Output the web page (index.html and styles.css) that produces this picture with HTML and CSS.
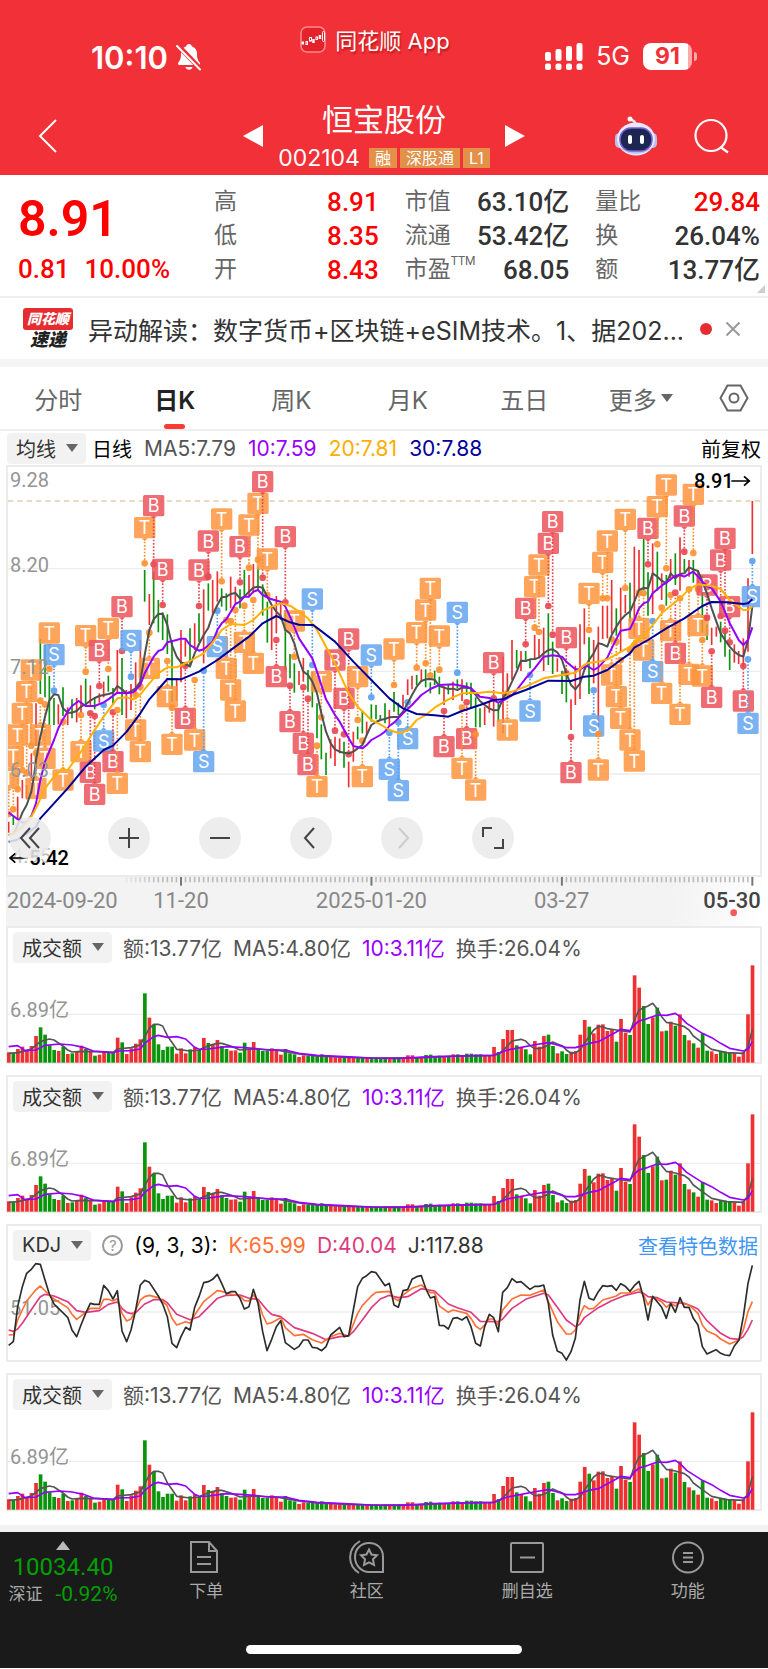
FILE: index.html
```html
<!DOCTYPE html>
<html lang="zh-CN">
<head>
<meta charset="utf-8">
<meta name="viewport" content="width=device-width, initial-scale=1">
<title>恒宝股份 002104</title>
<link rel="stylesheet" href="styles.css">
</head>
<body>
<header class="top">
  <div class="status">
    <div class="status-left">
      <span class="clock">10:10</span>
      <svg width="26" height="28" viewBox="0 0 26 28" fill="#fff"><path d="M13 1c-1.600 0-2.600 1-2.800 2.300C6.800 4.400 5 7.200 5 10.500c0 5-.8 6.700-2.700 9-.8 1-.3 2.500 1.100 2.500h19.200c1.400 0 1.900-1.500 1.100-2.500-1.900-2.300-2.700-4-2.700-9 0-3.300-1.800-6.100-5.200-7.200C15.600 2 14.600 1 13 1zM9.500 24h7c-.4 1.700-1.800 2.800-3.500 2.800S9.900 25.700 9.500 24z"/><path d="M2 2.500L24.500 26" stroke="#f23037" stroke-width="5"/><path d="M1 3L24 26.500" stroke="#fff" stroke-width="2" stroke-linecap="round"/></svg>
    </div>
    <div class="status-app">
      <svg width="26" height="27" viewBox="0 0 26 27"><rect x="1" y="1" width="24" height="25" rx="6" fill="#e5222c" stroke="#f98a8e" stroke-width="1.500"/><g stroke="#fff" fill="none"><path d="M1.500 17h2.500" stroke-width="3"/><rect x="6" y="15.500" width="1.500" height="3"/><rect x="9.500" y="11.500" width="2" height="3.500"/><path d="M13.500 13v4M20 9v4" stroke-width="2.500"/><rect x="16" y="11" width="1.500" height="2.500"/><rect x="22.500" y="5.500" width="2" height="10" rx="1"/></g></svg>
      <span>同花顺 App</span>
    </div>
    <div class="status-right">
      <svg width="38" height="27" viewBox="0 0 38 27" fill="#fff"><rect x="0" y="9" width="6" height="9" rx="2"/><rect x="10.500" y="6" width="6" height="12" rx="2"/><rect x="21" y="3" width="6" height="15" rx="2"/><rect x="31.500" y="0" width="6" height="18" rx="2"/><rect x="0" y="20.500" width="6" height="6.500" rx="2"/><rect x="10.500" y="20.500" width="6" height="6.500" rx="2"/><rect x="21" y="20.500" width="6" height="6.500" rx="2"/><rect x="31.500" y="20.500" width="6" height="6.500" rx="2"/></svg>
      <span class="net">5G</span>
      <span class="battery">91</span>
    </div>
  </div>
  <nav class="titlebar">
    <button class="icon-btn back" aria-label="返回"><svg width="20" height="36" viewBox="0 0 20 36" fill="none" stroke="#fff" stroke-width="2"><path d="M18 2L2 18l16 16"/></svg></button>
    <div class="stock">
      <button class="icon-btn" aria-label="上一只"><svg width="20" height="22" viewBox="0 0 20 22"><path d="M20 0v22L0 11z" fill="#fff"/></svg></button>
      <div class="stock-name">
        <h1>恒宝股份</h1>
        <div class="code"><span>002104</span><b>融</b><b>深股通</b><b>L1</b></div>
      </div>
      <button class="icon-btn" aria-label="下一只"><svg width="20" height="22" viewBox="0 0 20 22"><path d="M0 0v22l20-11z" fill="#fff"/></svg></button>
    </div>
    <div class="tools">
      <button class="icon-btn" aria-label="智能助手"><svg width="42" height="40" viewBox="0 0 42 40"><path d="M20 7c0-3-4-2-5-5" stroke="#e6e6fa" stroke-width="2.500" fill="none"/><circle cx="15" cy="3" r="2.500" fill="#fff"/><rect x="0" y="17" width="9" height="15" rx="4.500" fill="#b9bdf0"/><rect x="33" y="17" width="9" height="15" rx="4.500" fill="#b9bdf0"/><ellipse cx="21" cy="23" rx="19" ry="16.500" fill="#e9e9fb"/><path d="M5 31c5 9 27 9 32 0-5 5-27 5-32 0z" fill="#bfc0ee"/><rect x="5" y="12" width="32" height="23" rx="11" fill="#1c2650" stroke="#7460d8" stroke-width="1.500"/><rect x="13" y="19" width="4" height="9" rx="2" fill="#fff"/><rect x="25" y="19" width="4" height="9" rx="2" fill="#fff"/></svg></button>
      <button class="icon-btn" aria-label="搜索"><svg width="36" height="36" viewBox="0 0 36 36" fill="none" stroke="#fff" stroke-width="2.200"><circle cx="17" cy="17.500" r="15.500"/><path d="M26.500 29l7.500 5.500"/></svg></button>
    </div>
  </nav>
</header>

<main>
  <section class="quote">
    <div class="price"><strong>8.91</strong><div class="change"><span>0.81</span><span>10.00%</span></div></div>
    <dl><div><dt>高</dt><dd class="up">8.91</dd></div><div><dt>低</dt><dd class="up">8.35</dd></div><div><dt>开</dt><dd class="up">8.43</dd></div></dl>
    <dl><div><dt>市值</dt><dd>63.10亿</dd></div><div><dt>流通</dt><dd>53.42亿</dd></div><div><dt>市盈<sup>TTM</sup></dt><dd>68.05</dd></div></dl>
    <dl><div><dt>量比</dt><dd class="up">29.84</dd></div><div><dt>换</dt><dd>26.04%</dd></div><div><dt>额</dt><dd>13.77亿</dd></div></dl>
  </section>

  <section class="news">
    <div class="news-logo"><span class="brand">同花顺</span><span class="flash">速递</span></div>
    <p>异动解读：数字货币+区块链+eSIM技术。1、据202...</p>
    <i class="dot"></i>
    <button class="icon-btn" aria-label="关闭"><svg width="16" height="16" viewBox="0 0 16 16" stroke="#999" stroke-width="2"><path d="M1.500 1.500l13 13M14.500 1.500l-13 13"/></svg></button>
  </section>

  <div class="tabs">
    <button>分时</button><button class="active">日K</button><button>周K</button><button>月K</button><button>五日</button><button>更多<i class="caret"></i></button>
    <button class="settings" aria-label="设置"><svg width="30" height="28" viewBox="0 0 30 28" fill="none" stroke="#666" stroke-width="2"><path d="M8.500 1.500h13L28.500 14l-7 12.500h-13L1.500 14z"/><circle cx="15" cy="14" r="4.500"/></svg></button>
  </div>

  <div class="legend ma">
    <button class="picker">均线<i class="caret"></i></button>
    <span class="black">日线</span><span>MA5:7.79</span><span class="purple">10:7.59</span><span class="amber">20:7.81</span><span class="navy">30:7.88</span><span class="black end">前复权</span>
  </div>

  <section class="panel kline">
    <svg id="kline" viewBox="24 21 2256 1224"></svg>
    <div class="controls">
      <button aria-label="最早"><svg width="24" height="24" viewBox="0 0 24 24"><path d="M12 2L3 12l9 10M21 2l-9 10 9 10"/></svg></button>
      <button aria-label="放大"><svg width="24" height="24" viewBox="0 0 24 24"><path d="M12 2v20M2 12h20"/></svg></button>
      <button aria-label="缩小"><svg width="24" height="24" viewBox="0 0 24 24"><path d="M2 12h20"/></svg></button>
      <button aria-label="向前"><svg width="24" height="24" viewBox="0 0 24 24"><path d="M15 2L6 12l9 10"/></svg></button>
      <button aria-label="向后" disabled><svg width="24" height="24" viewBox="0 0 24 24"><path d="M9 2l9 10-9 10"/></svg></button>
      <button aria-label="全屏"><svg width="24" height="24" viewBox="0 0 24 24"><path d="M2 11V2h9M22 13v9h-9"/></svg></button>
    </div>
  </section>
  <div class="axis"><svg id="axis" viewBox="24 1251 2256 147"></svg></div>

  <section class="panel">
    <div class="legend"><button class="picker">成交额<i class="caret"></i></button><span>额:13.77亿</span><span>MA5:4.80亿</span><span class="purple">10:3.11亿</span><span>换手:26.04%</span></div>
    <svg class="volume" viewBox="24 312 2256 294"></svg>
  </section>
  <section class="panel">
    <div class="legend"><button class="picker">成交额<i class="caret"></i></button><span>额:13.77亿</span><span>MA5:4.80亿</span><span class="purple">10:3.11亿</span><span>换手:26.04%</span></div>
    <svg class="volume" viewBox="24 312 2256 294"></svg>
  </section>
  <section class="panel">
    <div class="legend"><button class="picker">KDJ<i class="caret"></i></button><button class="help" aria-label="说明">?</button><span class="black">(9, 3, 3):</span><span class="orange">K:65.99</span><span class="pink">D:40.04</span><span class="dark">J:117.88</span><a class="end" href="#data">查看特色数据</a></div>
    <svg id="kdj" viewBox="24 126 2256 294"></svg>
  </section>
  <section class="panel">
    <div class="legend"><button class="picker">成交额<i class="caret"></i></button><span>额:13.77亿</span><span>MA5:4.80亿</span><span class="purple">10:3.11亿</span><span>换手:26.04%</span></div>
    <svg class="volume" viewBox="24 312 2256 294"></svg>
  </section>
</main>

<footer class="bottom">
  <div class="bar">
    <button class="index"><i class="caret-up"></i><strong>10034.40</strong><span class="index-row"><span>深证</span><em>-0.92%</em></span></button>
    <button><svg width="34" height="34" viewBox="0 0 34 34"><path d="M2 2h18l8 9v21H2V2zM20 2v9h8M8 17h14M8 24h14"/></svg>下单</button>
    <button><svg width="36" height="34" viewBox="0 0 36 34"><path d="M34 32V17C34 8 28 3 20 3S6 9 6 17s6 15 14 15zM11 1C-2 9-2 25 10 33"/><path d="M20 9.500l2.500 5 5.500.8-4 4 1 5.700-5-2.700-5 2.700 1-5.700-4-4 5.500-.8z"/></svg>社区</button>
    <button><svg width="34" height="34" viewBox="0 0 34 34"><rect x="1" y="3" width="32" height="29" rx="1"/><path d="M10 17.500h15"/></svg>删自选</button>
    <button><svg width="34" height="34" viewBox="0 0 34 34"><circle cx="17" cy="17.500" r="15"/><path d="M12 13h10M12 17.500h10M12 22h10"/></svg>功能</button>
  </div>
  <div class="home"></div>
</footer>
<script src="charts.js"></script>
</body>
</html>
```

FILE: styles.css
```css
* { box-sizing: border-box; }
body { margin: 0; background: #fff; color: #333; font-family: Inter, "Noto Sans CJK SC", sans-serif; font-size: 20px; }
button { border: 0; padding: 0; background: none; font: inherit; color: inherit; }
h1, p, dl, dd { margin: 0; }
svg { display: block; flex: none; }
a { color: #3f96f5; text-decoration: none; }

.top { background: #f23037; color: #fff; height: 175px; }
.status { height: 92px; display: grid; grid-template-columns: 1fr auto 1fr; padding: 0 76px 0 58px; }
.status-left { display: flex; align-items: center; gap: 8px; padding: 22px 0 0 33px; }
.clock { font-size: 31px; font-weight: 600; }
.status-app { display: flex; align-items: center; gap: 9px; height: 78px; font-size: 22px; text-shadow: 1px 2px 2px #8008; }
.status-right { display: flex; align-items: center; justify-content: flex-end; gap: 13px; padding-top: 20px; }
.net { font-size: 25px; }
.battery { position: relative; width: 49px; height: 27px; border-radius: 8px; background: linear-gradient(90deg, #fff 91%, #faa 91%); color: #f23037; font-size: 23px; font-weight: 700; line-height: 27px; text-align: center; }
.battery::after { content: ""; position: absolute; right: -5px; top: 9px; width: 3px; height: 9px; border-radius: 0 3px 3px 0; background: #faa; }
.titlebar { height: 83px; display: grid; grid-template-columns: 1fr auto 1fr; align-items: center; padding: 4px 38px 0; }
.icon-btn { display: flex; align-items: center; }
.stock { display: flex; align-items: center; gap: 15px; }
.stock-name { text-align: center; }
.stock-name h1 { font-size: 31px; line-height: 44px; font-weight: 400; }
.code { display: flex; align-items: center; gap: 3px; font-size: 23px; line-height: 32px; }
.code span { margin-right: 6px; }
.code b { background: #e39049; font-size: 16px; line-height: 20px; font-weight: 400; padding: 0 6px; }
.tools { display: flex; align-items: center; justify-content: flex-end; gap: 37px; }

.quote { position: relative; height: 123px; display: flex; gap: 26px; padding: 10px 8px 0 18px; border-bottom: 2px solid #f0f0f0; font-family: Roboto, "Noto Sans CJK SC", sans-serif; }
.quote::after { content: ""; position: absolute; right: 3px; bottom: 3px; border: 4px solid; border-color: transparent #ccc #ccc transparent; }
.price { width: 170px; color: #f00; flex: none; }
.price strong { display: block; font-size: 50px; line-height: 68px; font-weight: 600; }
.change { display: flex; gap: 15px; font-size: 26px; line-height: 32px; font-weight: 500; }
.quote dl { flex: 1; }
.quote dl div { display: flex; justify-content: space-between; line-height: 34px; }
.quote dt { font-size: 23px; color: #666; white-space: nowrap; }
.quote sup { font-size: 12px; line-height: 1; vertical-align: 12px; }
.quote dd { font-size: 26px; font-weight: 500; }
.quote .up { color: #f00; }

.news { height: 69px; display: flex; align-items: center; padding: 0 27px 0 22px; border-bottom: 8px solid #f4f4f4; }
.news-logo { width: 52px; flex: none; display: flex; flex-direction: column; align-items: center; font-style: italic; font-weight: 900; margin-right: 14px; }
.brand { background: #e62c31; color: #fff; border-radius: 3px; width: 50px; font-size: 14px; line-height: 22px; text-align: center; }
.flash { font-size: 18px; line-height: 20px; color: #222; }
.news p { flex: 1; min-width: 0; font-size: 25px; white-space: nowrap; overflow: hidden; }
.dot { width: 12px; height: 12px; border-radius: 50%; background: #e62c31; margin: 0 13px 0 18px; }

.tabs { height: 64px; display: flex; border-bottom: 2px solid #eee; font-size: 24px; color: #666; }
.tabs button { flex: 1; display: flex; align-items: center; justify-content: center; position: relative; }
.tabs .active { color: #222; font-weight: 600; }
.tabs .active::after { content: ""; position: absolute; bottom: 0; width: 21px; height: 5px; border-radius: 3px; background: #f93b35; }
.tabs .settings { flex: 0 0 69px; }
.caret { border: 6px solid transparent; border-top: 8px solid #666; border-bottom: 0; }
.tabs .caret { margin-left: 4px; }

.legend { display: flex; align-items: center; gap: 11px; height: 36px; padding: 2px 2px 0 5px; white-space: nowrap; color: #555; font-size: 21px; }
.legend.ma { height: 34px; gap: 12px; padding: 0 7px; }
.picker, .ma .black, .legend a { font-size: 20px; }
.picker { height: 31px; padding: 0 8px 0 9px; border-radius: 4px; background: #f2f2f2; color: #333; display: flex; align-items: center; gap: 10px; }
.ma .picker { margin-right: -6px; }
.end { margin-left: auto; }
.black { color: #000; }
.dark { color: #333; }
.purple { color: #90f; }
.amber { color: #ffae00; }
.navy { color: #009; }
.orange { color: #ff7035; }
.pink { color: #dc3b80; }
.help { width: 21px; height: 21px; border: 2px solid #999; border-radius: 50%; color: #999; font-size: 15px; line-height: 17px; }

.panel { position: relative; margin: 0 6px 11px; border: 2px solid #ebebeb; }
.panel > svg, .axis svg { width: 100%; height: auto; overflow: visible; }
.kline { margin-bottom: 0; }
.panel > #kline { overflow: hidden; }
.axis { margin: 0 6px; padding: 0 2px; background: linear-gradient(100deg, #f3f3f3 88%, #fff); }
.controls { position: absolute; left: 1px; bottom: 16px; display: flex; gap: 49px; }
.controls button { width: 42px; height: 42px; border-radius: 50%; background: #eaeaeae0; display: grid; place-items: center; }
.controls button:first-child { margin-right: 8px; }
.controls path { fill: none; stroke: #444; stroke-width: 2; }
.controls button:disabled path { stroke: #ccc; }

svg text { font-family: Roboto, "Noto Sans CJK SC", sans-serif; font-size: 60px; fill: #949494; }
svg .date { font-size: 66px; fill: #888; }
svg .today { fill: #444; font-weight: 500; }
svg .tag { font-family: Inter, sans-serif; font-size: 54px; fill: #fff; text-anchor: middle; }
svg .extreme { fill: #000; font-weight: 500; }

.bottom { margin-top: 14px; padding-bottom: 14px; border-top: 7px solid #f2f2f2; background: #1a1a1a; color: #aaa; }
.bar { display: flex; height: 113px; }
.bar button { flex: 1; display: flex; flex-direction: column; align-items: center; font-size: 17px; line-height: 26px; padding-top: 8px; gap: 4px; }
.bar svg { fill: none; stroke: #999; stroke-width: 2; }
.bar .index { flex: 0 0 126px; padding-top: 9px; gap: 0; font-family: Roboto, "Noto Sans CJK SC", sans-serif; }
.caret-up { border: 7px solid transparent; border-bottom: 9px solid #bbb; border-top: 0; }
.index strong { color: #00a000; font-size: 24px; line-height: 34px; font-weight: 400; }
.index-row { display: flex; gap: 13px; line-height: 20px; }
.index em { font-style: normal; color: #00a000; font-size: 21px; font-weight: 400; }
.home { width: 36%; height: 9px; border-radius: 5px; background: #fff; margin: 0 auto; }
```

FILE: charts.js
```js
// Chart units are device pixels at 3x.
const RED = '#ee3032', GREEN = '#0a940a';
const STEP = 13.604, X0 = 26;

// x high low colour
const candles = `26 1085 1118 r,40 1068 1095 g,53 1010 1080 r,67 960 1015 r,80 975 1018 r,94 880 970 r,108 730 858 r,121 537 702 g,135 555 712 g,148 648 795 g,162 714 795 g,175 733 793 r,189 682 768 g,203 742 795 r,216 718 775 g,230 714 787 r,243 676 760 r,257 656 735 g,271 676 740 r,284 712 748 g,298 700 728 r,311 665 712 r,325 647 695 g,339 684 735 g,352 570 700 r,366 594 765 g,379 690 775 r,393 672 750 r,407 607 700 r,421 540 690 r,434 330 425 g,448 402 495 r,461 335 490 g,475 420 517 g,488 457 540 g,502 463 582 g,516 545 725 g,530 655 722 r,543 510 667 r,556 535 590 r,570 505 622 g,584 490 570 r,597 460 545 g,611 388 610 r,625 370 452 g,638 360 460 r,652 334 425 r,665 385 440 g,679 400 452 g,692 350 445 r,706 380 430 r,720 388 445 g,733 330 410 g,747 345 412 r,760 312 400 r,774 320 390 g,788 373 467 g,802 425 548 g,815 440 570 r,829 408 520 r,842 425 480 r,856 450 630 g,870 582 655 g,883 610 698 g,897 633 675 r,910 594 665 r,924 630 695 g,937 635 742 g,951 730 835 g,964 793 898 g,978 878 945 g,992 838 895 r,1005 830 918 r,1019 835 880 r,1032 845 923 g,1046 905 982 r,1060 815 905 r,1073 800 838 g,1087 752 820 g,1100 785 822 r,1114 733 785 g,1128 735 778 g,1141 765 780 g,1155 730 790 g,1168 750 800 r,1182 696 755 g,1195 728 765 g,1209 704 740 r,1223 658 705 r,1236 647 688 r,1250 645 675 g,1264 628 665 r,1277 628 682 g,1291 667 700 g,1304 632 675 g,1318 650 703 g,1332 678 735 r,1345 675 703 g,1359 665 720 r,1372 658 685 g,1386 658 723 r,1400 667 705 g,1413 668 745 g,1427 712 802 g,1440 745 802 g,1454 740 795 r,1468 722 758 r,1481 720 800 r,1495 730 785 g,1509 590 820 r,1522 640 690 r,1536 540 660 r,1550 570 625 g,1563 573 633 r,1577 573 605 g,1590 597 625 g,1604 525 600 r,1617 537 593 r,1631 503 633 r,1645 460 615 g,1658 545 642 g,1672 595 635 r,1686 632 702 g,1699 632 727 g,1713 718 810 r,1726 617 735 r,1740 493 717 r,1753 445 553 r,1767 532 702 g,1781 540 670 r,1795 500 803 r,1808 437 537 r,1822 437 535 r,1835 360 520 r,1849 445 527 g,1862 383 575 r,1876 405 460 r,1890 368 487 g,1903 260 530 r,1917 270 390 r,1931 237 390 g,1944 337 467 g,1958 250 462 r,1972 275 392 g,1985 340 420 r,1999 345 437 g,2012 297 355 r,2026 280 375 g,2040 232 392 r,2053 297 335 g,2067 300 350 r,2080 300 368 g,2094 330 400 r,2107 347 518 g,2121 493 540 g,2135 503 555 r,2149 500 530 r,2162 485 547 g,2175 507 590 g,2189 568 630 g,2203 553 608 r,2216 573 612 r,2230 535 620 r,2244 355 575 r,2257 123 282 r`.split(',').map(s => s.split(' '));

const ma5 = '26,1125 40,1122 53,1095 67,1058 80,1035 94,995 103,940 108,900 121,830 135,770 148,722 162,703 175,705 189,745 203,758 216,758 230,753 243,740 257,733 271,722 284,714 298,708 311,705 325,702 339,698 352,678 366,688 379,700 393,694 407,685 421,665 434,585 448,510 461,478 475,462 488,461 502,495 516,555 530,590 543,607 556,612 570,619 584,580 597,552 611,525 625,503 638,465 652,435 665,412 679,410 692,402 706,399 720,415 733,410 747,395 760,383 774,380 788,383 802,410 815,435 829,455 842,468 856,510 870,520 883,550 897,600 910,635 924,645 937,665 951,700 964,760 978,815 992,850 1005,868 1019,875 1032,878 1046,880 1060,875 1073,865 1087,855 1100,825 1114,795 1128,786 1141,780 1155,777 1168,772 1182,771 1195,771 1209,755 1223,730 1236,705 1250,680 1264,663 1277,658 1291,657 1304,659 1318,678 1332,683 1345,687 1359,686 1372,690 1386,683 1400,683 1413,685 1427,705 1440,723 1454,735 1468,745 1481,751 1495,750 1509,715 1522,695 1536,665 1550,635 1563,602 1577,603 1590,598 1604,597 1617,593 1631,580 1645,570 1658,568 1672,577 1686,600 1699,640 1713,675 1726,688 1740,670 1753,630 1767,600 1781,580 1795,550 1808,553 1822,560 1835,525 1849,500 1862,480 1876,465 1890,455 1903,425 1917,390 1931,384 1944,385 1958,340 1972,350 1985,362 1999,370 2012,340 2026,355 2040,342 2053,340 2067,322 2080,328 2094,333 2107,365 2121,400 2135,445 2149,485 2162,520 2175,540 2189,560 2203,575 2216,585 2230,590 2244,540 2257,440';
const ma10 = '26,1058 40,1068 67,1088 80,1085 94,1068 108,1030 121,960 135,905 162,840 175,805 189,778 203,755 216,738 236,723 257,738 284,738 311,727 325,718 352,698 380,700 400,697 421,675 434,640 461,590 475,573 488,568 502,547 530,540 543,536 556,536 570,555 597,572 611,568 638,545 652,510 665,490 679,478 706,432 720,425 733,410 747,410 760,395 774,390 788,405 815,418 842,425 856,440 870,470 897,535 937,595 951,635 978,718 1005,765 1019,785 1046,835 1060,858 1087,865 1100,855 1114,840 1141,825 1155,815 1168,798 1182,788 1209,760 1236,735 1264,705 1291,687 1318,675 1359,673 1400,680 1413,685 1440,710 1468,714 1495,728 1509,722 1536,706 1550,690 1577,655 1604,625 1631,590 1658,586 1686,590 1699,605 1726,628 1740,628 1760,617 1781,630 1795,622 1822,593 1835,565 1862,512 1890,507 1903,480 1917,445 1931,430 1944,425 1958,400 1985,377 2012,358 2026,347 2040,345 2053,350 2080,335 2094,350 2107,365 2121,378 2135,385 2149,405 2162,425 2175,455 2189,490 2203,515 2216,540 2230,555 2244,540 2257,502';
const ma20 = '26,1125 40,1122 67,1100 94,1070 108,1045 135,985 162,950 185,930 203,930 243,875 271,830 311,770 352,715 380,712 400,718 420,705 448,670 475,640 502,622 530,622 570,603 611,580 638,548 665,510 692,492 733,495 760,480 788,452 815,440 842,430 870,437 897,455 924,475 951,510 978,560 1005,610 1046,700 1073,740 1114,780 1141,793 1168,810 1195,819 1223,812 1250,780 1277,765 1304,743 1345,718 1386,700 1440,698 1468,695 1509,700 1536,695 1577,680 1631,655 1672,647 1726,638 1753,615 1767,608 1795,605 1822,598 1849,583 1890,560 1903,545 1931,530 1958,495 1985,460 2012,437 2040,415 2067,388 2094,373 2135,378 2162,387 2189,420 2230,450 2244,449 2257,440';
const ma30 = '26,1145 50,1140 80,1122 108,1100 121,1075 162,1030 203,985 257,920 311,870 339,857 380,815 421,760 448,718 502,657 543,658 597,635 652,600 706,560 747,530 788,490 829,468 870,487 897,494 940,495 1005,545 1060,605 1114,660 1168,715 1209,745 1250,762 1304,766 1345,770 1386,753 1440,735 1481,720 1509,718 1536,705 1577,690 1645,662 1713,663 1753,650 1781,647 1822,630 1862,600 1890,580 1903,563 1944,540 1999,505 2053,475 2107,438 2135,426 2180,427 2230,432 2244,430 2257,418';

// type x tagY dotY
const marks = `T 94 630 857,T 80 695 940,T 67 760 930,T 53 825 988,T 40 889 1048,T 26 954 1062,T 121 825 722,T 135 895 733,T 108 985 880,T 148 519 627,S 162 584 692,T 189 960 785,T 257 527 635,T 325 505 627,B 298 572 678,B 366 440 573,S 393 541 650,T 243 875 765,B 271 937 760,B 284 1003 768,S 311 843 735,B 339 905 757,T 352 970 750,T 407 810 705,T 421 875 680,T 448 625 518,T 434 203 310,B 461 137 313,B 488 328 435,T 502 710 603,T 516 853 743,B 556 775 617,T 584 840 660,S 611 905 632,B 597 330 438,B 625 243 350,T 665 177 364,S 652 560 452,T 679 625 480,T 692 690 483,T 706 753 450,B 720 260 367,T 733 547 437,T 760 610 420,T 747 195 323,T 774 130 299,B 788 65 353,T 802 297 405,B 856 230 427,B 829 650 540,T 883 483 590,B 870 785 677,B 910 850 682,B 924 914 716,S 937 417 615,T 951 980 857,T 964 665 772,B 1005 600 812,B 1032 715 823,B 1046 537 883,T 1073 650 780,T 1087 950 842,S 1114 585 712,S 1168 928 818,S 1195 992 787,S 1223 836 727,T 1182 567 675,T 1250 518 623,T 1277 450 610,T 1291 385 647,T 1318 528 629,S 1372 457 638,B 1332 860 753,B 1400 836 727,T 1386 925 743,T 1427 990 823,B 1481 608 715,T 1522 810 700,S 1590 753 645,B 1577 445 553,T 1604 380 503,T 1617 315 516,B 1645 250 438,B 1658 185 524,B 1699 533 640,B 1713 938 831,T 1767 400 510,S 1781 798 691,T 1795 930 822,T 1808 307 415,T 1822 243 415,T 1876 178 384,T 1835 645 538,T 1849 710 545,T 1862 775 600,T 1890 840 570,T 1903 903 555,T 1917 505 398,T 1931 570 400,S 1958 635 483,B 1944 205 313,T 1972 140 253,T 1999 75 325,B 2053 168 275,T 2080 103 279,T 1985 700 443,T 2012 512 405,B 2026 580 398,T 2040 763 415,T 2067 643 388,T 2107 648 540,T 2094 497 388,B 2121 375 473,B 2135 712 574,B 2162 300 468,B 2175 235 512,B 2189 440 547,B 2230 723 618,S 2244 790 598,S 2257 410 303`.split(',').map(s => s.split(' '));

const amounts = [577,580,567,560,572,558,528,502,524,556,570,573,560,582,580,575,557,567,572,587,584,577,578,577,533,547,582,565,551,538,400,473,495,553,570,560,560,581,565,580,568,562,570,534,549,555,540,558,567,572,571,578,548,567,546,566,573,573,565,570,584,567,580,583,591,586,588,588,588,583,588,588,592,592,592,594,594,592,592,594,592,592,594,592,592,592,592,592,586,586,591,590,585,584,588,587,588,590,583,583,585,581,581,583,583,588,587,561,576,537,510,510,556,563,568,583,543,560,528,524,558,580,574,582,575,573,524,480,500,520,494,493,513,510,545,477,518,525,346,383,438,492,472,443,514,512,485,497,463,525,541,550,563,520,572,574,582,573,575,577,580,590,577,463,316];
const amount5 = '26,580 53,578 67,575 94,567 121,545 148,537 162,540 189,558 203,570 216,576 243,574 284,575 340,577 352,567 393,563 421,555 434,530 448,505 461,493 475,493 488,498 502,527 530,568 570,573 597,570 625,557 652,550 665,550 692,558 720,570 760,567 829,570 856,575 897,582 951,588 1046,592 1114,594 1250,594 1370,588 1481,586 1495,582 1509,572 1522,558 1536,543 1563,538 1577,543 1590,557 1604,566 1622,565 1640,558 1658,546 1672,552 1686,557 1699,570 1713,580 1726,578 1740,570 1753,550 1767,530 1781,510 1795,500 1808,500 1822,506 1849,510 1862,512 1890,516 1903,480 1917,450 1944,438 1958,430 1972,447 1985,470 1999,487 2026,492 2053,500 2067,510 2080,528 2107,548 2135,568 2180,578 2230,580 2244,560 2257,508';
const amount10 = '26,560 53,557 75,572 108,570 135,556 180,552 216,555 250,562 280,573 340,578 352,573 393,572 421,567 434,550 461,530 475,526 502,532 530,530 557,537 584,562 597,568 625,567 679,560 733,563 760,565 802,570 856,570 897,580 951,586 1032,590 1114,594 1195,595 1300,590 1481,586 1522,570 1560,563 1600,555 1645,548 1672,555 1699,563 1726,563 1753,555 1767,550 1795,545 1822,530 1849,516 1862,508 1890,512 1903,495 1917,483 1944,475 1972,465 2000,466 2026,460 2040,470 2060,490 2080,503 2107,520 2135,533 2162,550 2189,565 2230,573 2244,568 2257,545';

const lineJ = '26,376 40,365 53,260 67,200 80,160 94,148 107,131 121,133 135,180 148,222 162,252 203,292 216,330 230,350 243,315 257,280 271,250 284,253 298,253 311,196 325,212 339,237 352,212 366,333 380,365 393,330 407,270 421,195 434,181 448,187 475,228 488,252 502,290 516,370 530,383 543,350 557,322 570,330 584,262 597,230 611,188 625,185 638,178 652,163 665,190 679,222 692,215 706,215 720,235 733,267 747,260 760,208 774,250 788,335 801,392 815,358 829,320 842,302 856,368 883,388 897,379 910,360 924,360 937,382 951,384 965,392 978,380 992,345 1019,322 1032,350 1046,347 1060,270 1073,200 1087,175 1100,167 1114,155 1128,158 1155,197 1168,190 1182,255 1195,262 1209,212 1223,209 1236,178 1250,170 1264,167 1277,205 1291,234 1304,230 1318,316 1332,317 1345,327 1359,295 1372,293 1386,300 1400,290 1413,320 1427,370 1441,378 1454,320 1468,283 1481,293 1495,335 1508,217 1522,203 1536,176 1550,187 1563,185 1590,208 1604,199 1617,199 1631,195 1645,250 1658,345 1672,393 1686,400 1699,420 1713,395 1726,355 1740,240 1753,184 1767,235 1781,240 1795,215 1808,197 1822,199 1835,197 1849,211 1862,191 1876,199 1890,214 1903,197 1917,184 1931,235 1944,300 1958,229 1985,262 1999,295 2012,250 2026,277 2040,233 2053,262 2067,262 2080,295 2094,315 2107,380 2121,402 2148,389 2162,400 2175,405 2189,407 2203,378 2217,360 2230,290 2244,190 2257,136';
const lineK = '26,345 40,344 53,300 67,270 80,243 107,210 121,198 148,225 162,237 203,263 216,283 230,298 257,277 271,265 298,265 311,238 325,238 339,243 352,236 366,280 380,303 393,297 407,270 421,240 434,230 448,226 475,233 500,255 516,295 530,315 557,305 570,310 584,285 611,245 652,212 665,214 692,222 720,228 733,242 747,243 760,225 774,242 788,285 801,312 815,308 842,293 856,323 883,347 910,343 937,359 965,369 992,350 1019,340 1046,348 1073,280 1087,257 1114,228 1128,217 1168,214 1182,235 1195,242 1209,225 1236,205 1264,195 1291,218 1304,218 1318,258 1345,277 1359,270 1400,280 1413,295 1427,318 1441,328 1454,315 1468,297 1481,297 1495,315 1508,270 1536,237 1563,225 1590,226 1631,210 1645,245 1672,305 1699,342 1713,342 1726,330 1740,285 1753,257 1767,267 1781,265 1808,240 1849,228 1862,219 1890,219 1917,207 1931,225 1944,255 1958,232 1985,245 1999,262 2012,250 2026,258 2040,245 2053,252 2067,255 2094,280 2107,315 2121,333 2148,345 2162,357 2189,372 2217,360 2230,330 2244,275 2257,245';
const lineD = '26,330 40,334 53,327 67,310 107,250 121,230 135,223 162,228 203,245 230,272 257,277 298,272 325,253 352,246 366,265 380,277 393,281 407,278 434,252 461,239 488,239 502,248 530,283 570,299 597,290 652,235 679,226 720,225 747,235 774,238 801,270 815,283 842,290 883,323 937,340 978,359 1019,350 1046,348 1060,335 1087,300 1114,263 1141,237 1168,226 1195,233 1223,230 1264,206 1304,213 1345,252 1372,263 1413,277 1441,304 1495,305 1508,297 1536,265 1577,238 1631,220 1645,225 1672,262 1699,300 1726,320 1740,312 1753,293 1795,263 1835,242 1876,226 1917,216 1931,220 1944,230 1972,233 1999,246 2053,250 2080,260 2094,267 2121,302 2162,340 2189,355 2217,358 2230,350 2244,328 2257,300';

const grid = y => `<path d="M24 ${y}H2280" stroke="#ededed" stroke-width="4"/>`;
const line = (points, colour, width = 5) => `<polyline points="${points}" fill="none" stroke="${colour}" stroke-width="${width}" stroke-linejoin="round"/>`;
const text = (x, y, s, cls = '', extra = '') => `<text x="${x}" y="${y}" class="${cls}" ${extra}>${s}</text>`;

const tint = { B: ['#ec5159', '#e94650'], T: ['#ff943c', '#ff9030'], S: ['#62a4f0', '#5a9ff0'] };
function mark([type, x, tag, dot]) {
  x = +x; tag = +tag; dot = +dot;
  const dir = dot > tag ? 1 : -1, edge = tag + dir * 32, [fill, ink] = tint[type];
  return `<path d="M${x} ${edge}V${dot}" stroke="${ink}" stroke-width="5" stroke-dasharray="5 5"/>` +
    `<circle cx="${x}" cy="${dot}" r="10" fill="${ink}" opacity=".9"/>` +
    `<g opacity=".84"><rect x="${x - 32}" y="${tag - 32}" width="64" height="64" rx="5" fill="${fill}"/>` +
    `<path d="M${x - 10} ${edge}h20l-10 ${dir * 9}z" fill="${fill}"/></g>` + text(x, tag + 20, type, 'tag');
}

document.getElementById('kline').innerHTML =
  [326, 634, 942].map(grid).join('') +
  '<path d="M24 123H2280" stroke="#e8cdae" stroke-width="4" stroke-dasharray="16 12"/>' +
  candles.map(([x, a, b, c]) => `<path d="M${x} ${a}V${b}" stroke="${c === 'r' ? RED : GREEN}" stroke-width="5"/>`).join('') +
  marks.map(mark).join('') +
  line(ma5, '#505050', 6) + line(ma10, '#9400ff', 6) + line(ma20, '#ffb000', 6) + line(ma30, '#000096', 6) +
  text(30, 80, '9.28') + text(30, 335, '8.20') + text(30, 643, '7.12') + text(30, 952, '6.03') + text(36, 1210, '4.95', '', 'opacity=".6"') +
  text(88, 1214, '5.42', 'extreme') + text(2082, 84, '8.91', 'extreme') +
  '<path d="M84 1194H30m16-14l-16 14 16 14M2194 63h54m-16-14l16 14-16 14" fill="none" stroke="#000" stroke-width="5"/>';

let ticks = '';
for (let i = 26; i < 165; i++) {
  const x = X0 + i * STEP, major = [38, 80, 122, 164].includes(i);
  ticks += `<path d="M${x} 1251v${major ? 26 : 16}" stroke="${major ? '#777' : '#bbb'}" stroke-width="${major ? 6 : 5}" opacity="${Math.min(1, (i - 24) / 10)}"/>`;
}
document.getElementById('axis').innerHTML = ticks +
  text(20, 1343, '2024-09-20', 'date') +
  text(543, 1343, '11-20', 'date', 'text-anchor="middle"') +
  text(1114, 1343, '2025-01-20', 'date', 'text-anchor="middle"') +
  text(1685, 1343, '03-27', 'date', 'text-anchor="middle"') +
  text(2282, 1343, '05-30', 'date today', 'text-anchor="end"') +
  '<circle cx="2201" cy="1358" r="10" fill="#f55a5a"/>';

const volume = grid(463) + text(30, 470, '6.89亿') +
  amounts.map((y, i) => `<rect x="${X0 + i * STEP - 5}" y="${y}" width="11" height="${608 - y}" fill="${candles[i][3] === 'r' ? RED : GREEN}"/>`).join('') +
  line(amount5, '#555') + line(amount10, '#9400ff');
document.querySelectorAll('.volume').forEach(el => { el.innerHTML = volume; });

document.getElementById('kdj').innerHTML = grid(276) + text(30, 284, '51.05') +
  line(lineD, '#dc3b80') + line(lineK, '#ff7035') + line(lineJ, '#2c2c2c');
```
